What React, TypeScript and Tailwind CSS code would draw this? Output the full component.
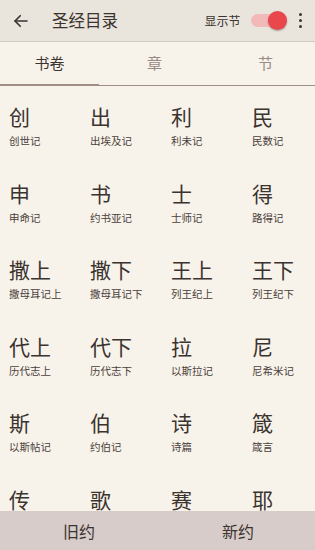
import React from 'react';

const books: [string, string][] = [
  ['创', '创世记'], ['出', '出埃及记'], ['利', '利未记'], ['民', '民数记'],
  ['申', '申命记'], ['书', '约书亚记'], ['士', '士师记'], ['得', '路得记'],
  ['撒上', '撒母耳记上'], ['撒下', '撒母耳记下'], ['王上', '列王纪上'], ['王下', '列王纪下'],
  ['代上', '历代志上'], ['代下', '历代志下'], ['拉', '以斯拉记'], ['尼', '尼希米记'],
  ['斯', '以斯帖记'], ['伯', '约伯记'], ['诗', '诗篇'], ['箴', '箴言'],
  ['传', '传道书'], ['歌', '雅歌'], ['赛', '以赛亚书'], ['耶', '耶利米书'],
];

const font = { fontFamily: '"Noto Sans CJK SC", "Noto Sans", sans-serif' };

export default function App() {
  return (
    <div className="w-[315px] h-[550px] flex flex-col bg-[#f8f3ea] text-[#3b3330] overflow-hidden" style={font}>
      {/* top bar */}
      <div className="h-[42px] flex items-center bg-[#e9e4dc] border-b border-[#d3cbc2] shrink-0">
        <button className="w-[40px] pl-[12px] flex items-center">
          <svg width="18" height="18" viewBox="0 0 24 24" fill="none" stroke="#3b3330" strokeWidth="2.2" strokeLinecap="round" strokeLinejoin="round">
            <path d="M20 12H4" />
            <path d="M11 5l-7 7 7 7" />
          </svg>
        </button>
        <div className="ml-[12px] text-[16.5px]">圣经目录</div>
        <div className="ml-auto text-[12px] mr-[10px]">显示节</div>
        <div className="relative w-[34px] h-[18px] mr-[14px] flex items-center">
          <div className="w-[32px] h-[13px] rounded-full bg-[#f1b9b7]" />
          <div className="absolute right-[-2px] w-[19px] h-[19px] rounded-full bg-[#e9474c] shadow-[0_1px_2px_rgba(0,0,0,0.3)]" />
        </div>
        <div className="flex flex-col gap-[2.5px] mr-[13px]">
          <span className="w-[3.5px] h-[3.5px] rounded-full bg-[#3b3330]" />
          <span className="w-[3.5px] h-[3.5px] rounded-full bg-[#3b3330]" />
          <span className="w-[3.5px] h-[3.5px] rounded-full bg-[#3b3330]" />
        </div>
      </div>

      {/* tabs */}
      <div className="h-[44px] flex shrink-0 border-b border-[#a08d86] bg-[#f8f3ea]">
        <div className="flex-1 flex items-center justify-center text-[15px] text-[#3b3330] border-b-[2px] border-[#a08d86] mb-[-1px]">书卷</div>
        <div className="flex-1 flex items-center justify-center text-[15px] text-[#978a84] pl-[6px]">章</div>
        <div className="flex-1 flex items-center justify-center text-[15px] text-[#978a84] pl-[12px]">节</div>
      </div>

      {/* books grid */}
      <div className="flex-1 overflow-hidden pt-[16px] pl-[9px]">
        <div className="grid grid-cols-[repeat(4,81px)]">
          {books.map(([abbr, name]) => (
            <div key={abbr} className="h-[76.5px] flex flex-col">
              <div className="text-[21px] leading-[28px]">{abbr}</div>
              <div className="text-[10.5px] leading-[14px] mt-[4px] text-[#4a403c] whitespace-nowrap">{name}</div>
            </div>
          ))}
        </div>
      </div>

      {/* bottom */}
      <div className="h-[39px] flex bg-[#d7ccc9] shrink-0">
        <div className="flex-1 flex items-center justify-center text-[16px] pl-[2px]">旧约</div>
        <div className="flex-1 flex items-center justify-center text-[16px] pl-[5px]">新约</div>
      </div>
    </div>
  );
}
